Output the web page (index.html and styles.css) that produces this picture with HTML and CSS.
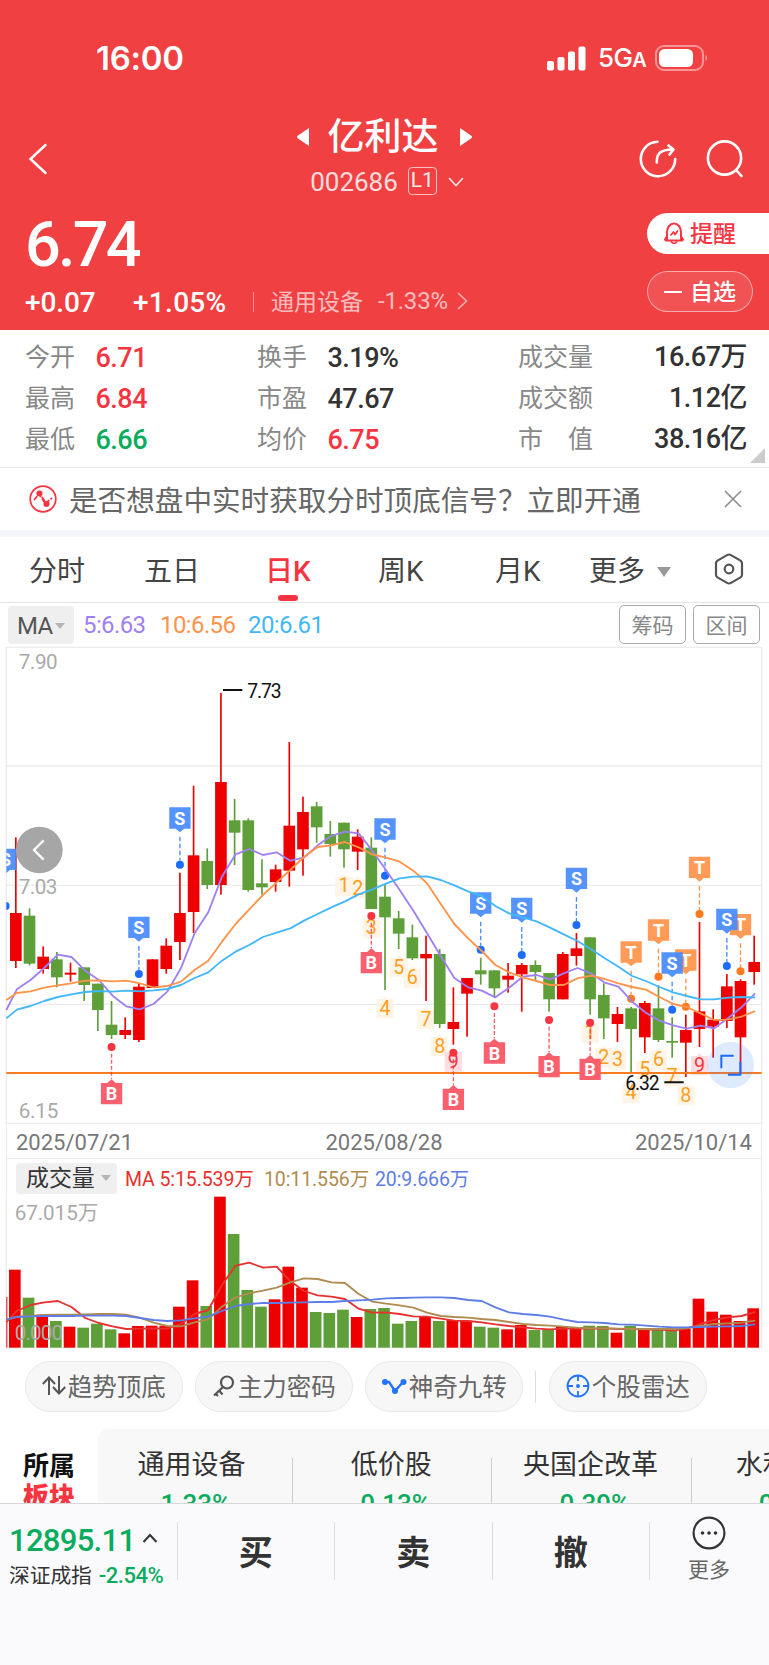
FILE: index.html
```html
<!DOCTYPE html>
<html lang="zh-CN">
<head>
  <meta charset="UTF-8">
  <meta name="viewport" content="width=device-width, initial-scale=1.0">
  <title>亿利达 002686</title>
  <link rel="stylesheet" href="styles.css">
</head>
<body>

<header class="header">
  <div class="status">
    <span class="clock">16:00</span>
    <svg class="signal" width="39" height="25" viewBox="0 0 39 25" fill="#fff">
      <rect x="0" y="15" width="7" height="9.5" rx="2"/>
      <rect x="10.5" y="11" width="7" height="13.5" rx="2"/>
      <rect x="21" y="5.500" width="7" height="19" rx="2"/>
      <rect x="31.500" y="0.500" width="7" height="24" rx="2"/>
    </svg>
    <span class="net">5G<small>A</small></span>
    <svg class="battery" width="54" height="26" viewBox="0 0 54 26">
      <rect x="1" y="1" width="47" height="24" rx="8" fill="none" stroke="#fff" stroke-opacity=".45" stroke-width="2"/>
      <rect x="4" y="4" width="34" height="18" rx="5.500" fill="#fff"/>
      <path d="M50.500 9.500q3 3.500 0 7z" fill="#fff" fill-opacity=".5"/>
    </svg>
  </div>

  <div class="nav">
    <svg class="back" width="20" height="32" viewBox="0 0 20 32" fill="none" stroke="#fff" stroke-width="2.500" stroke-linecap="round"><path d="M17.500 2L2.500 16l15 14"/></svg>
    <div class="title">
      <div class="name">
        <svg width="12" height="18" viewBox="0 0 12 18" fill="#fff"><path d="M12 0v18L1 10.500q-2-1.500 0-3z"/></svg>
        <h1>亿利达</h1>
        <svg width="12" height="18" viewBox="0 0 12 18" fill="#fff"><path d="M0 0v18l11-7.500q2-1.500 0-3z"/></svg>
      </div>
      <div class="code">
        <span>002686</span><em>L1</em>
        <svg width="16" height="10" viewBox="0 0 16 10" fill="none" stroke="#fff" stroke-opacity=".85" stroke-width="1.600"><path d="M1 1l7 7.500L15 1"/></svg>
      </div>
    </div>
    <div class="nav-icons">
      <svg width="38" height="38" viewBox="0 0 38 38" fill="none" stroke="#fff" stroke-width="2.600" stroke-linecap="round" stroke-linejoin="round">
        <path d="M18.500 1.800A17.200 17.200 0 1 0 36.200 19"/>
        <path d="M17.800 22.500C17.500 14 21 9.500 33.500 9.500M29.500 5.500l5 4-4 5"/>
      </svg>
      <svg width="38" height="38" viewBox="0 0 38 38" fill="none" stroke="#fff" stroke-width="2.600" stroke-linecap="round">
        <circle cx="18.500" cy="18" r="16.600"/><path d="M30.500 30.500l5 5.500"/>
      </svg>
    </div>
  </div>

  <div class="quote">
    <div class="last">
      <div class="price">6.74</div>
      <div class="change">
        <span class="diff">+0.07</span><span class="pct">+1.05%</span><i></i>
        <span class="sector">通用设备</span><span class="sector-pct">-1.33%</span>
        <svg width="11" height="18" viewBox="0 0 11 18" fill="none" stroke="#fff" stroke-opacity=".6" stroke-width="1.600"><path d="M1 1l8.500 8L1 17"/></svg>
      </div>
    </div>
    <div class="actions">
      <div class="remind">
        <svg width="22" height="23" viewBox="0 0 22 23" fill="none" stroke="#f83441" stroke-width="2" stroke-linejoin="round">
          <path d="M2 18.500h18M4 18v-8a7 8.500 0 0 1 14 0v8M1.500 18.500l2-3.500M20.500 18.500l-2-3.500"/>
          <path d="M8 19.500q3 4 6 0M7.500 13.500l3-3.500 1.500 2.500 3-4" stroke-width="1.700"/>
        </svg>
        <span>提醒</span>
      </div>
      <div class="fav"><b></b><span>自选</span></div>
    </div>
  </div>
</header>

<section class="stats">
  <dl>
    <dt>今开</dt><dd class="up">6.71</dd>
    <dt>最高</dt><dd class="up">6.84</dd>
    <dt>最低</dt><dd class="down">6.66</dd>
  </dl>
  <dl class="mid">
    <dt>换手</dt><dd>3.19%</dd>
    <dt>市盈</dt><dd>47.67</dd>
    <dt>均价</dt><dd class="up">6.75</dd>
  </dl>
  <dl class="wide">
    <dt>成交量</dt><dd>16.67万</dd>
    <dt>成交额</dt><dd>1.12亿</dd>
    <dt>市　值</dt><dd>38.16亿</dd>
  </dl>
</section>

<section class="notice">
  <svg width="28" height="28" viewBox="0 0 28 28" fill="none" stroke="#f83441" stroke-width="1.700">
    <circle cx="14" cy="14" r="12.800"/>
    <path d="M5 15l5-6 6 9M13 12l4 6 6-5" stroke-dasharray="5 1.500"/>
    <circle cx="10.500" cy="8.500" r="2.200" fill="#f83441"/><circle cx="17.500" cy="19" r="2.200" fill="#f83441"/>
  </svg>
  <p>是否想盘中实时获取分时顶底信号？立即开通</p>
  <svg width="18" height="18" viewBox="0 0 18 18" stroke="#8a8a8a" stroke-width="1.600"><path d="M1 1l16 16M17 1L1 17"/></svg>
</section>

<nav class="tabs">
  <a>分时</a><a>五日</a><a class="active">日K</a><a>周K</a><a>月K</a><a class="more">更多</a>
  <svg width="30" height="32" viewBox="0 0 30 32" fill="none" stroke="#555" stroke-width="2.200" stroke-linejoin="round">
    <path d="M15 1.500q1 0 2 .6l9.500 5.500q1.500 1 1.500 2.600v11.600q0 1.600-1.500 2.600L17 29.900q-2 1.200-4 0l-9.500-5.500Q2 23.400 2 21.800V10.200q0-1.600 1.500-2.600L13 2.100q1-.6 2-.6z"/>
    <circle cx="15" cy="16" r="4.300"/>
  </svg>
</nav>

<section class="ma-bar">
  <span class="chip">MA</span>
  <span class="ma5">5:6.63</span><span class="ma10">10:6.56</span><span class="ma20">20:6.61</span>
  <button>筹码</button><button>区间</button>
</section>

<svg id="kline" class="kline" width="769" height="480" viewBox="0 15 2307 1440"></svg>

<div class="volume">
  <div class="dates"><span>2025/07/21</span><span>2025/08/28</span><span>2025/10/14</span></div>
  <div class="vol-bar">
    <span class="chip">成交量</span>
    <span class="v5">MA 5:15.539万</span><span class="v10">10:11.556万</span><span class="v20">20:9.666万</span>
  </div>
</div>
<svg id="vol" class="vol" width="769" height="154" viewBox="0 228 2307 462"></svg>

<section class="tools">
  <div class="tool">
    <svg width="24" height="22" viewBox="0 0 24 22" fill="none" stroke="#555" stroke-width="2"><path d="M7 20V3M.8 9L7 2.500l6 6.500M17 1v17M11 12l6 6.500 6.200-6.500"/></svg>趋势顶底
  </div>
  <div class="tool">
    <svg width="24" height="22" viewBox="0 0 24 22" fill="none" stroke="#555" stroke-width="2.200"><circle cx="15" cy="7.500" r="6"/><path d="M11 12L2 20.500M7 15.500l3.500 4M3.500 18.500l2.500 2.500"/></svg>主力密码
  </div>
  <div class="tool">
    <svg width="26" height="22" viewBox="0 0 26 22" fill="none" stroke="#2274ff" stroke-width="2.400"><path d="M4 7h4l6 9 8-9"/><g fill="#2274ff" stroke="none"><circle cx="4" cy="7" r="3"/><circle cx="14" cy="16" r="3"/><circle cx="22.500" cy="7" r="3"/></g></svg>神奇九转
  </div>
  <i></i>
  <div class="tool">
    <svg width="24" height="24" viewBox="0 0 24 24" fill="none" stroke="#2274ff" stroke-width="1.800"><circle cx="12" cy="12" r="10.500"/><path d="M12 2v5M12 17v5M2 12h5M17 12h5"/><circle cx="12" cy="12" r="2" fill="#2274ff" stroke="none"/></svg>个股雷达
  </div>
</section>

<section class="blocks">
  <h3>所属<b>板块</b></h3>
  <div class="block-list">
    <div><p>通用设备</p><span>-1.33%</span></div>
    <div><p>低价股</p><span>-0.13%</span></div>
    <div><p>央国企改革</p><span>-0.39%</span></div>
    <div><p>水利水电</p><span>-0.51%</span></div>
  </div>
</section>

<footer class="footer">
  <div class="index">
    <div class="value">12895.11<svg width="16" height="10" viewBox="0 0 16 10" fill="none" stroke="#333" stroke-width="2"><path d="M1.500 9L8 2l6.500 7"/></svg></div>
    <div class="sub">深证成指 <span>-2.54%</span></div>
  </div>
  <div class="trade">买</div>
  <div class="trade">卖</div>
  <div class="trade">撤</div>
  <div class="other">
    <svg width="34" height="34" viewBox="0 0 34 34" fill="none" stroke="#333" stroke-width="2.200"><circle cx="17" cy="17" r="15.400"/><g fill="#333" stroke="none"><circle cx="10.500" cy="17" r="1.800"/><circle cx="17" cy="17" r="1.800"/><circle cx="23.500" cy="17" r="1.800"/></g></svg>
    <span>更多</span>
  </div>
</footer>

<script src="script.js"></script>
</body>
</html>
```
FILE: styles.css
```css
* { box-sizing: border-box; }
body {
  margin: 0;
  width: 769px;
  height: 1665px;
  overflow: hidden;
  background: #fff;
  color: #333;
  font-family: Roboto, "Noto Sans CJK SC", sans-serif;
}
h1, h3, p, dl, dd { margin: 0; }
svg { display: block; flex: none; }
em { font-style: normal; }

/* header */
.header { height: 330px; background: #f04042; color: #fff; }
.status {
  display: flex; align-items: center;
  height: 116px; padding: 0 60px 0 96px;
}
.clock {
  flex: 1; font: 600 33px/40px Inter, sans-serif; letter-spacing: -0.3px;
}
.net { width: 57px; padding-top: 2px; font: 500 26px/30px Inter, sans-serif; letter-spacing: -0.6px; }
.net small { font-size: 20px; font-weight: 600; }
.signal { margin-right: 12px; }
.nav { display: flex; height: 90px; padding: 0 25px 0 28px; }
.back { margin-top: 27px; }
.title { flex: 1; padding-left: 24px; }
.name { display: flex; justify-content: center; align-items: center; height: 42px; gap: 19px; padding-top: 2px; }
.name h1 { font-size: 37px; line-height: 38px; font-weight: 500; width: 113px; white-space: nowrap; }
.name svg { margin-top: -2px; }
.code { display: flex; justify-content: center; align-items: center; height: 46px; padding: 2px 0 0 6px; font-size: 26px; letter-spacing: 0; }
.code span { opacity: .82; }
.code em {
  width: 29px; height: 28px; margin: -2px 11px 0 10px;
  border: 1.500px solid rgba(255, 255, 255, .75); border-radius: 4px;
  font-size: 21px; line-height: 25px; text-align: center; opacity: .9;
}
.nav-icons { display: flex; gap: 29px; padding-top: 24px; width: 105px; margin-left: -57px; }
.quote { display: flex; justify-content: space-between; height: 124px; }
.last { padding-left: 25px; }
.price { height: 76px; font-size: 63px; line-height: 78px; font-weight: 500; letter-spacing: -2.800px; }
.change { display: flex; align-items: center; height: 40px; font-size: 28px; font-weight: 500; }
.diff { width: 108px; letter-spacing: -0.1px; }
.pct { width: 120px; letter-spacing: .3px; }
.change i { width: 1px; height: 20px; margin-right: 17px; background: rgba(255, 255, 255, .5); }
.sector { width: 107px; margin-top: -4px; font-size: 23px; font-weight: 400; opacity: .65; }
.sector-pct { width: 79px; margin-top: -2px; font-size: 24px; font-weight: 400; letter-spacing: -0.2px; opacity: .65; }
.change svg { margin-top: -2px; }
.actions { width: 122px; padding-top: 7px; font-size: 23px; font-weight: 500; }
.remind, .fav { display: flex; align-items: center; height: 41px; }
.remind span, .fav span { margin-top: -3px; }
.remind { gap: 5px; padding-left: 16px; background: #fff; color: #f83441; border-radius: 21px 0 0 21px; }
.fav {
  width: 106px; margin-top: 17px; padding-left: 16px; gap: 8px;
  border: 1.500px solid rgba(255, 255, 255, .5); border-radius: 21px;
  background: rgba(255, 255, 255, .1);
}
.fav b { width: 18px; height: 2px; background: #fff; }

/* stats */
.stats {
  position: relative; display: flex; height: 138px; padding: 7px 22px 0 25px;
  border-bottom: 1.500px solid #ececec;
}
.stats dl {
  display: grid; grid-template-columns: 70.500px 1fr; grid-auto-rows: 41px;
  width: 232px;
}
.stats .mid { width: 261px; }
.stats .wide { width: 229px; grid-template-columns: 90px 1fr; }
.stats dt { color: #888; font-size: 25px; line-height: 41px; }
.stats dd { font-size: 27px; font-weight: 500; letter-spacing: -0.5px; line-height: 43px; }
.stats .wide dd { text-align: right; line-height: 41px; }
.stats .up { color: #f83441; }
.stats .down { color: #08ac5c; }
.stats::after {
  content: ""; position: absolute; right: 4px; bottom: 4px;
  border-left: 15px solid transparent; border-bottom: 15px solid #ccc;
}

/* notice */
.notice {
  display: flex; align-items: center; height: 69px; padding: 0 27px 0 29px;
  border-bottom: 7px solid #f3f5fa;
}
.notice p { flex: 1; margin: -2px 0 0 12px; color: #666; font-size: 28.600px; white-space: nowrap; }
.notice svg { margin-top: -1px; }

/* tabs */
.tabs {
  position: relative; display: flex; align-items: center;
  height: 66px; border-bottom: 1.500px solid #e4e4e4; padding: 0 0 2px 29px;
  color: #444; font-size: 28px;
}
.tabs a { width: 115px; }
.tabs a:nth-child(2) { width: 121px; }
.tabs a:nth-child(3) { width: 113px; }
.tabs a:nth-child(4) { width: 117px; }
.tabs a:nth-child(5) { width: 94px; }
.tabs .more { width: 125px; }
.tabs .more::after {
  content: ""; display: inline-block; margin: 0 0 4px 12px;
  border: 7px solid transparent; border-top: 10px solid #999; border-bottom: 0;
}
.tabs .active { position: relative; color: #f83441; font-weight: 500; }
.tabs .active::after {
  content: ""; position: absolute; left: 13px; bottom: -12px;
  width: 20px; height: 6px; border-radius: 3px; background: #f83441;
}

/* indicator rows */
.ma-bar { display: flex; align-items: center; height: 42px; padding: 0 8px; font-size: 24px; letter-spacing: -0.6px; }
.chip { background: #efefef; border-radius: 4px; color: #555; white-space: nowrap; }
.chip::after {
  content: ""; display: inline-block; margin: 0 0 5px 2px;
  border: 5px solid transparent; border-top: 6px solid #b5b5b5; border-bottom: 0;
}
.ma-bar span { flex: none; padding-top: 2px; }
.ma-bar .chip { width: 66px; height: 38px; margin: 1px 9px 0 0; padding: 1px 0 0 9px; line-height: 38px; }
.ma5 { width: 77px; color: #9f80f3; }
.ma10 { width: 88px; color: #ff9349; }
.ma20 { width: 371px; color: #41b7fc; }
.ma-bar button {
  flex: none; width: 67px; height: 39px; margin: 1px 7px 0 0; padding: 0 0 2px;
  border: 1.500px solid #aaa; border-radius: 5px; background: #fff;
  color: #888; font: 21px "Noto Sans CJK SC", sans-serif;
}
.volume { height: 71px; margin: 0 7px 0 6px; border: solid #ececec; border-width: 0 1px; }
.dates {
  display: flex; justify-content: space-between; align-items: center;
  height: 34px; padding: 2px 9px 0; border-bottom: 1px solid #ececec;
  color: #777; font-size: 22px; letter-spacing: 0;
}
.vol-bar { display: flex; align-items: center; height: 37px; padding: 2px 0 0 9px; font-size: 19.500px; letter-spacing: -0.1px; white-space: nowrap; }
.vol-bar span { margin-top: -2px; }
.vol-bar .chip { width: 101px; height: 31px; margin: 0 8px 0 0; padding-left: 10px; color: #333; font-size: 23px; line-height: 31px; }
.vol-bar .chip::after { margin-left: 6px; }
.v5 { width: 139px; color: #e8302e; }
.v10 { width: 111px; color: #b08b50; }
.v20 { color: #5e7de6; }

.badge-text { font-weight: 700; font-size: 54px; fill: #fff; text-anchor: middle; }
.count { font-size: 59px; text-anchor: middle; }
.axis { font-size: 62px; fill: #aaa; }
.peak { font-size: 58px; fill: #111; }

/* tools */
.tools { display: flex; height: 79px; padding: 11px 0 0 25px; }
.tool {
  display: flex; align-items: center; justify-content: center; gap: 2px;
  width: 157.500px; height: 51px; margin-right: 12.500px; padding-bottom: 2px;
  border: 1px solid #e8e8e8; border-radius: 26px; background: #f7f7f7;
  color: #666; font-size: 24.500px; white-space: nowrap;
}
.tools i { width: 1px; height: 32px; margin: 10px 13px 0 0; background: #ddd; }

/* sector blocks */
.blocks { display: flex; height: 74px; overflow: hidden; }
.blocks h3 { width: 98px; padding: 22px 0 0 23px; color: #111; font-size: 26px; line-height: 31px; font-weight: 700; flex: none; }
.blocks b { display: block; color: #f83441; }
.block-list { display: flex; flex: none; width: 800px; background: #f8f8f8; border-radius: 10px 0 0 0; padding-top: 15px; }
.block-list div { position: relative; flex: none; width: 199.300px; text-align: center; padding-right: 1px; }
.block-list div:first-child { width: 194px; padding-right: 7px; }
.block-list div + div::before {
  content: ""; position: absolute; left: 0; top: 14px; width: 1px; height: 60px; background: #ccc;
}
.block-list p { font-size: 27px; line-height: 42px; }
.block-list span { display: block; margin-top: 3px; color: #08ac5c; font-size: 26px; font-weight: 500; line-height: 30px; }

/* footer */
.footer { display: flex; height: 162px; border-top: 1.500px solid #d8d8dc; background: #fafafc; }
.index { width: 176.500px; padding: 16px 0 0 9px; flex: none; }
.value { display: flex; align-items: center; gap: 9px; height: 40px; color: #08ac5c; font-size: 31px; font-weight: 500; letter-spacing: -0.7px; }
.value svg { margin: -5px 0 0 -2px; }
.sub { font-size: 20.800px; line-height: 32px; white-space: nowrap; letter-spacing: -0.1px; }
.sub span { margin-left: 2px; color: #08ac5c; font-size: 22px; font-weight: 500; letter-spacing: -0.5px; }
.trade {
  width: 157.500px; height: 58px; margin-top: 18px; border-left: 1px solid #ddd;
  font-size: 34px; line-height: 62px; font-weight: 700; text-align: center;
}
.other { width: 119px; height: 58px; margin-top: 18px; border-left: 1px solid #ddd; }
.other svg { margin: -6px auto 0; }
.other span { display: block; margin-top: 4px; color: #666; font-size: 21px; line-height: 32px; text-align: center; }
```
FILE: script.js
```js
const RED = '#ee0000', GREEN = '#5f9f3a';
const STEP = 41.02;

// [color, high, body top, body bottom, low]
const candles = [
  ['r',592,819,963,984], ['g',805,827,971,976], ['r',919,950,987,1001], ['g',936,958,1012,1042],
  ['r',968,998,1004,1025], ['g',982,982,1035,1083], ['g',1031,1031,1110,1173], ['g',1083,1154,1185,1197],
  ['r',1132,1170,1185,1197], ['r',1032,1040,1200,1206], ['r',958,958,1044,1044], ['r',895,917,987,1001],
  ['r',698,819,906,960], ['r',437,646,816,879], ['g',625,663,735,747], ['r',159,426,735,764],
  ['g',477,541,578,675], ['g',535,541,750,755], ['g',658,730,742,764], ['r',674,688,726,755],
  ['r',306,557,692,740], ['r',470,516,628,707], ['g',486,499,562,608], ['g',543,582,612,650],
  ['g',548,548,628,683], ['r',568,590,635,690], ['g',592,623,807,807], ['g',733,770,832,1050],
  ['g',813,835,881,927], ['g',854,892,955,960], ['r',887,942,955,1083], ['g',927,942,1152,1164],
  ['r',1042,1146,1167,1214], ['r',1014,1014,1061,1190], ['g',953,991,1003,1034], ['g',991,991,1045,1074],
  ['r',969,1007,1019,1058], ['r',969,975,1003,1115], ['g',961,975,996,1020], ['g',999,999,1078,1115],
  ['r',936,942,1078,1078], ['r',879,925,948,977], ['g',892,892,1078,1124], ['g',1030,1065,1135,1197],
  ['r',1101,1122,1152,1206], ['g',1101,1105,1167,1302], ['r',1083,1089,1192,1239], ['g',1036,1105,1200,1206],
  ['g',1132,1203,1208,1253], ['r',1124,1170,1208,1311], ['r',846,1114,1167,1221], ['r',1108,1139,1160,1253],
  ['r',1002,1039,1143,1164], ['r',1018,1023,1192,1300], ['r',887,966,996,1034]
];

const volumes = [
  449,533,584,603,620,623,611,628,640,618,617,617,560,481,558,230,342,510,560,538,440,503,576,579,569,591,567,564,
  611,603,590,603,600,602,620,623,628,615,630,628,619,626,617,618,638,617,627,628,630,627,536,575,584,603,565
];

// first value sits on the left edge of the chart
const priceLines = {
  '#9f80f3': [1110,1048,1020,984,944,951,992,1020,1067,1099,1108,1092,1055,985,880,817,710,643,627,645,637,662,653,616,588,575,580,632,690,750,812,880,948,1014,1042,1052,1072,1043,1010,1005,1018,1000,984,1000,1028,1040,1085,1118,1142,1156,1166,1157,1165,1135,1102,1060],
  '#ff9349': [1080,1059,1054,1043,1036,1030,1022,1021,1024,1022,1030,1042,1038,1025,990,962,905,852,808,765,727,690,651,621,616,606,622,643,653,665,692,730,792,852,895,933,975,997,1012,1023,1035,1035,1015,1007,1017,1030,1041,1049,1071,1092,1101,1120,1140,1139,1130,1113],
  '#41b7fc': [1135,1109,1098,1083,1071,1063,1056,1053,1055,1052,1054,1051,1047,1035,1014,997,962,935,915,891,878,865,842,822,802,784,763,748,731,715,710,709,720,736,754,768,798,820,832,844,863,883,903,928,955,980,1008,1023,1041,1057,1068,1078,1078,1073,1071,1072]
};
const volLines = {
  '#e8302e': [606,573,555,547,543,561,594,609,619,627,626,625,626,612,582,570,495,437,428,443,440,483,513,526,530,537,566,578,577,582,589,590,596,602,603,607,613,618,622,626,628,626,626,626,625,627,627,629,629,632,626,612,600,592,588,576],
  '#b08b50': [600,590,588,585,584,584,583,582,582,584,593,608,618,619,607,598,560,532,520,512,503,487,475,477,487,489,522,545,551,556,563,578,588,591,593,597,600,606,612,615,617,620,623,625,625,626,627,627,627,627,624,618,612,610,608,602],
  '#5e7de6': [598,591,589,588,588,588,587,587,587,588,594,600,603,601,595,590,573,558,552,549,549,548,547,546,546,543,541,539,535,534,533,532,532,534,540,543,562,577,582,585,590,599,606,607,609,613,614,617,620,622,622,621,620,619,618,613]
};

// [index, badge top] for sell / T signals, [index, dot] for buy signals
const tops = [[45,904],[47,838],[49,928],[50,650],[53,822]];
const sells = [[-0.75,626],[9,830],[12,502],[27,535],[34,757],[37,773],[41,683],[48,937],[52,806]];
const buys = [[7,1221],[26,828],[32,1238],[35,1099],[39,1140],[42,1148]];
// [index, number, box top]
const counts = [
  [24,1,710],[25,2,717],[26,3,835],[27,4,1077],[28,5,954],[29,6,986],[30,7,1110],[31,8,1191],[32,9,1237],
  [42,1,1150],[43,2,1224],[44,3,1231],[45,4,1331],[46,5,1262],[47,6,1231],[48,7,1281],[49,8,1338],[50,9,1248]
];

const px = i => 47.5 + STEP * i;
const vx = i => 44.5 + STEP * i;
const rect = (x, y, w, h, fill) => `<rect x="${x}" y="${y}" width="${w}" height="${h}" fill="${fill}"/>`;
const hline = (y, color = '#ececec', w = 4) => `<path d="M19 ${y}H2285" stroke="${color}" stroke-width="${w}"/>`;

function curve(values, color) {
  const pts = values.map((y, i) => (i ? px(i - 1) + 3 : 19) + ',' + y).join(' ');
  return `<polyline points="${pts}" fill="none" stroke="${color}" stroke-width="5.500" stroke-linejoin="round"/>`;
}

function flagDown(i, y, letter, color, dark) {
  const x = px(i);
  return `<path d="M${x} ${y + 88}V${y + 160}" stroke="${color}" stroke-width="4" stroke-dasharray="14 7"/>
    <path d="M${x - 32} ${y}h64v64h-19l-13 11-13-11h-19z" fill="${color}" fill-opacity=".92"/>
    <circle cx="${x}" cy="${y + 172}" r="12" fill="${dark}"/>
    <text class="badge-text" x="${x}" y="${y + 52}">${letter}</text>`;
}

function flagUp(i, y) {
  const x = px(i), t = y + 108;
  return `<path d="M${x} ${y + 20}V${t - 12}" stroke="#f83441" stroke-opacity=".8" stroke-width="4" stroke-dasharray="12 6"/>
    <path d="M${x - 32} ${t}h19l13-11 13 11h19v64h-64z" fill="#fa5f6d"/>
    <circle cx="${x}" cy="${y}" r="12" fill="#f83441"/>
    <text class="badge-text" x="${x}" y="${t + 52}">B</text>`;
}

function count([i, n, y]) {
  const x = px(i), hot = n === 9;
  return `<path d="M${x - 26} ${y}h18l8-9 8 9h18v58h-52z" fill="${hot ? '#ffdcdf' : '#fff4e6'}"/>
    <text class="count" x="${x}" y="${y + 47}" fill="${hot ? '#f83441' : '#ff9f1c'}">${n}</text>`;
}

function drawKline() {
  let s = '<defs><clipPath id="area"><rect x="19" y="15" width="2266" height="1440"/></clipPath></defs>';
  s += [22, 378, 736, 1093, 1450].map(y => hline(y)).join('');
  s += '<path d="M19 22V1455M2285 22V1455" stroke="#ececec" stroke-width="4"/>';
  s += '<text class="axis" x="56" y="86" textLength="117">7.90</text>';
  s += '<text class="axis" x="56" y="761" textLength="116">7.03</text>';
  s += '<text class="axis" x="56" y="1435" textLength="119">6.15</text>';
  s += counts.map(count).join('');
  candles.forEach(([c, hi, a, b, lo], i) => {
    const color = c === 'r' ? RED : GREEN;
    s += rect(px(i) - 2.5, hi, 5, lo - hi, color) + rect(px(i) - 17.5, a, 35, b - a, color);
  });
  s += hline(1299, '#f97b22', 6);
  s += '<g clip-path="url(#area)">';
  s += tops.map(([i, y]) => flagDown(i, y, 'T', '#ff9349', '#ff7a1c')).join('');
  s += sells.map(([i, y]) => flagDown(i, y, 'S', '#478bff', '#1c6cff')).join('');
  s += buys.map(([i, y]) => flagUp(i, y)).join('');
  s += '</g>';
  for (const color in priceLines) s += curve(priceLines[color], color);
  s += '<path d="M669 150h58M1993 1327h58" stroke="#111" stroke-width="6"/>';
  s += '<text class="peak" x="742" y="174" textLength="103">7.73</text>';
  s += '<text class="peak" x="1876" y="1351" textLength="103">6.32</text>';
  // scroll and expand buttons
  s += '<circle cx="118" cy="630" r="70" fill="#a6a6a6"/><path d="M131 601l-29 29 29 29" fill="none" stroke="#fff" stroke-width="7"/>';
  s += '<circle cx="2192" cy="1275" r="70" fill="#2f7bff" fill-opacity=".16"/>';
  s += '<path d="M2164 1285v-38h37M2221 1266v38h-37" fill="none" stroke="#1c6cff" stroke-width="6"/>';
  document.getElementById('kline').innerHTML = s;
}

function drawVolume() {
  let s = '<path d="M19 228V683H2285V228" fill="none" stroke="#ececec" stroke-width="4"/>';
  s += rect(19, 531, 3, 152, RED);
  volumes.forEach((y, i) => {
    s += rect(vx(i) - 17.5, y, 35, 683 - y, candles[i][0] === 'r' ? RED : GREEN);
  });
  for (const color in volLines) s += curve(volLines[color], color);
  s += '<text class="axis" x="44" y="299" textLength="251">67.015万</text>';
  s += '<text class="axis" x="44" y="660" textLength="145">0.000</text>';
  document.getElementById('vol').innerHTML = s;
}

drawKline();
drawVolume();
```
